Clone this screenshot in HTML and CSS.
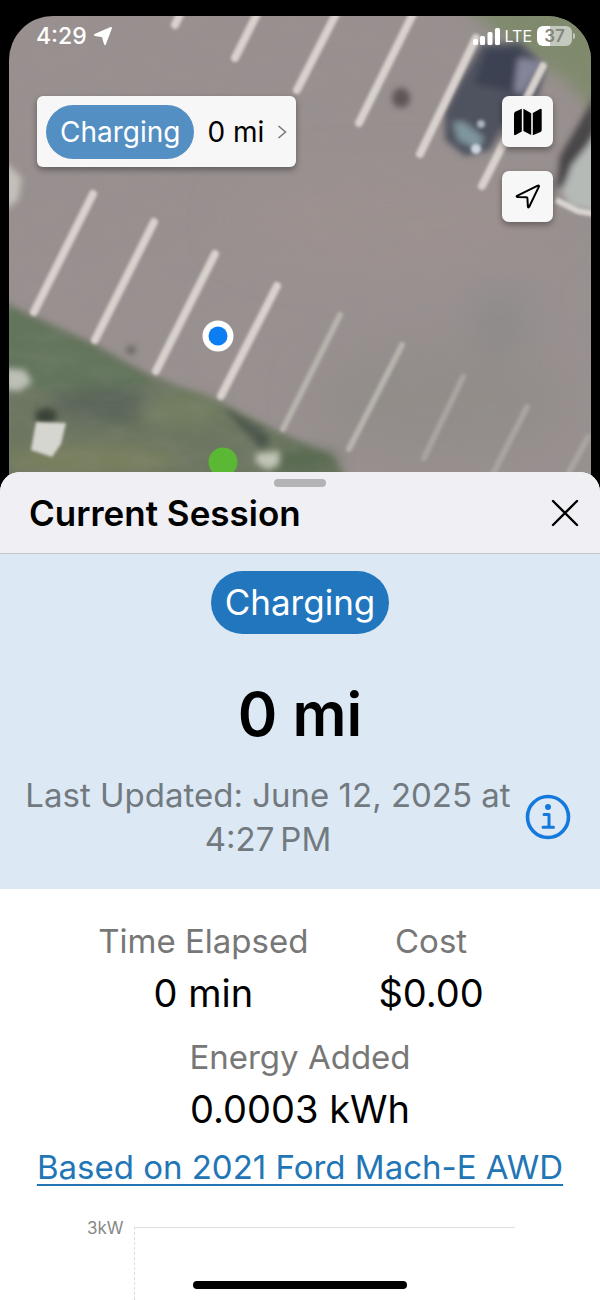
FILE: index.html
```html
<!DOCTYPE html>
<html lang="en">

<head>
    <meta charset="UTF-8">
    <meta name="viewport" content="width=device-width, initial-scale=1">
    <title>Current Session</title>
    <link rel="stylesheet" href="styles.css">
</head>

<body>
    <!-- Map with status bar and controls over it -->
    <div class="map-area">
        <svg class="map" viewBox="9 16 582 476" preserveAspectRatio="xMidYMin slice" aria-hidden="true">
            <defs>
                <filter id="soft" x="-20%" y="-20%" width="140%" height="140%">
                    <feGaussianBlur stdDeviation="1.4" />
                </filter>
                <filter id="medium" x="-20%" y="-20%" width="140%" height="140%">
                    <feGaussianBlur stdDeviation="3" />
                </filter>
                <filter id="softer" x="-30%" y="-30%" width="160%" height="160%">
                    <feGaussianBlur stdDeviation="8" />
                </filter>
                <filter id="softest" x="-30%" y="-30%" width="160%" height="160%">
                    <feGaussianBlur stdDeviation="20" />
                </filter>
                <filter id="grain" x="0" y="0" width="100%" height="100%">
                    <feTurbulence type="fractalNoise" baseFrequency="0.03 0.06" numOctaves="3" seed="8" />
                    <feColorMatrix type="matrix" values="0 0 0 0 0.3  0 0 0 0 0.3  0 0 0 0 0.28  1.2 0 0 0 -0.42" />
                </filter>
            </defs>
            <rect x="9" y="16" width="582" height="476" fill="#999090" />

            <!-- tone changes in the asphalt -->
            <g filter="url(#softest)">
                <ellipse cx="390" cy="220" rx="160" ry="50" fill="#9c9290" />
                <ellipse cx="440" cy="400" rx="130" ry="60" fill="#938d8a" />
                <ellipse cx="500" cy="320" rx="20" ry="30" fill="#888888" />
            </g>
            <path d="M455 0H610V130L570 84L520 50Z" fill="#7f8a6c" filter="url(#softer)" />

            <!-- grass -->
            <g filter="url(#medium)">
                <path d="M0 300L32 315L95 344L150 375L215 400L280 432L330 455L365 500H0Z" fill="#6c7661" />
                <path d="M0 304L95 348L150 379L130 410L60 400L0 370Z" fill="#63755c" />
            </g>
            <g filter="url(#softer)">
                <ellipse cx="110" cy="405" rx="60" ry="18" fill="#5b665a" />
                <ellipse cx="180" cy="410" rx="40" ry="14" fill="#748062" />
                <ellipse cx="90" cy="460" rx="90" ry="14" fill="#79805f" />
                <ellipse cx="305" cy="462" rx="34" ry="12" fill="#56694f" />
            </g>
            <path d="M224 408L262 428L270 440L262 452L250 438Z" fill="#4c564b" filter="url(#medium)" />
            <rect x="9" y="16" width="582" height="476" filter="url(#grain)" opacity="0.25" />

            <!-- dark spots and pale rocks -->
            <g filter="url(#medium)">
                <path d="M5 162L22 178L18 200L5 210Z" fill="#c4c0ba" />
                <ellipse cx="401" cy="98" rx="9" ry="10" fill="#5f5254" />
                <ellipse cx="131" cy="350" rx="4" ry="4" fill="#5d5855" />
                <ellipse cx="46" cy="416" rx="11" ry="8" fill="#3a4339" />
                <path d="M5 368L25 370L32 382L20 391L5 390Z" fill="#bcc0b5" />
                <path d="M256 453L280 451L279 465L268 470L256 463Z" fill="#c0c5b6" />
            </g>
            <path d="M36 422L66 423L61 444L52 457L31 450Z" fill="#d6d6d0" filter="url(#soft)" />

            <!-- parked cars -->
            <g filter="url(#medium)">
                <path d="M482 44L520 42L546 66L538 95L508 118L490 150L465 156L445 140L445 112L460 82Z" fill="#4f525f" />
                <path d="M486 50L520 48L526 66L512 92L474 84Z" fill="#3e4353" />
                <path d="M518 58L543 62L522 94L514 90Z" fill="#85859a" />
                <path d="M453 122L464 122L484 138L478 150L458 140Z" fill="#7f959d" />
                <path d="M595 96L580 122L560 156L556 190L572 180L595 130Z" fill="#484648" />
                <path d="M600 130L572 165L562 192L570 206L600 212Z" fill="#b6bab7" />
            </g>
            <g filter="url(#soft)">
                <circle cx="481" cy="124" r="4" fill="#a9b3bd" />
                <circle cx="476" cy="149" r="5" fill="#ccd5e0" />
                <path d="M556 200L578 211L596 214" fill="none" stroke="#d8d5d1" stroke-width="6" />
            </g>

            <!-- parking stripes -->
            <g filter="url(#soft)" fill="none" stroke-width="8" stroke-linecap="round">
                <g stroke="#d8d1cd">
                    <path d="M182 10L175 25" />
                    <path d="M257 14L235 58" />
                    <path d="M337 12L297 90" />
                    <path d="M414 12L359 123" />
                    <path d="M476 38L420 154" />
                    <path d="M543 66L482 186" />
                    <path d="M93 194L34 312" />
                    <path d="M154 222L95 340" />
                    <path d="M215 254L156 371" />
                    <path d="M277 286L221 396" />
                </g>
                <g stroke="#b8b4ae" stroke-width="6">
                    <path d="M340 315L283 429" />
                    <path d="M402 345L349 449" />
                </g>
                <g stroke="#a9a4a0" stroke-width="6">
                    <path d="M463 377L424 458" />
                    <path d="M527 407L493 474" />
                    <path d="M588 437L567 476" />
                </g>
            </g>

            <!-- current location and charger -->
            <circle cx="218" cy="336" r="15.500" fill="#fff" />
            <circle cx="218" cy="336" r="9.500" fill="#0d7ef2" />
            <circle cx="223" cy="462" r="14.500" fill="#5bb834" />
        </svg>

        <div class="overlay">
            <div class="status-bar">
                <span class="status-time">4:29
                    <svg width="20" height="20" viewBox="0 0 20 20" aria-hidden="true">
                        <path d="M2 9L18 2L12 18L9.800 10.200Z" fill="#fff" stroke="#fff" stroke-width="2" stroke-linejoin="round" />
                    </svg>
                </span>
                <span class="status-signal">
                    <svg width="27" height="17" viewBox="0 0 27 17" fill="#fff" aria-hidden="true">
                        <rect x="0" y="11" width="5" height="6" rx="1.500" />
                        <rect x="7" y="8" width="5" height="9" rx="1.500" />
                        <rect x="14.500" y="4" width="5" height="13" rx="1.500" />
                        <rect x="22" y="0" width="5" height="17" rx="1.500" />
                    </svg>
                    LTE
                    <span class="battery">37</span>
                </span>
            </div>

            <div class="map-controls">
                <button type="button" class="session-card">
                    <span class="pill pill-small">Charging</span>
                    <span>0 mi</span>
                    <svg width="10" height="16" viewBox="0 0 10 16" aria-hidden="true">
                        <path d="M1.500 2L8.500 8L1.500 14" fill="none" stroke="#777" stroke-width="1.500" />
                    </svg>
                </button>
                <div class="map-buttons">
                    <button type="button" class="map-button" aria-label="Map type">
                        <svg width="30" height="28" viewBox="0 0 30 28" aria-hidden="true">
                            <path d="M1 6Q1 4.500 2.200 3.800L8.800 .8V23.500L2.500 27Q1 27.600 1 26ZM10.400 .8L18.200 5.300V27L10.400 23ZM19.800 5L27 1Q28.700 .3 28.700 2V22Q28.700 23.300 27.500 24L19.800 27.300Z" fill="#000" />
                        </svg>
                    </button>
                    <button type="button" class="map-button" aria-label="My location">
                        <svg width="26" height="26" viewBox="0 0 26 26" aria-hidden="true">
                            <path d="M2 11.800L22.800 1.600Q24.400 1.200 23.900 2.600L14.200 22.800Q13.200 24.300 12.900 22.500L12.400 14.200Q12.300 13.400 11.400 13.300L2.500 13Q1 12.500 2 11.800Z" fill="none" stroke="#000" stroke-width="2" stroke-linejoin="round" />
                        </svg>
                    </button>
                </div>
            </div>
        </div>
    </div>

    <!-- Current session sheet -->
    <main class="sheet">
        <header class="sheet-header">
            <div class="grabber"></div>
            <div class="sheet-title">
                <h1>Current Session</h1>
                <button type="button" class="close-button" aria-label="Close">
                    <svg width="28" height="28" viewBox="0 0 28 28" aria-hidden="true">
                        <path d="M2 2L26 26M26 2L2 26" stroke="#000" stroke-width="2.400" stroke-linecap="round" />
                    </svg>
                </button>
            </div>
        </header>

        <section class="summary">
            <span class="pill">Charging</span>
            <p class="range">0 mi</p>
            <div class="updated">
                <p>Last Updated: June 12, 2025 at 4:27&#8239;PM</p>
                <button type="button" class="info-button" aria-label="More information">
                    <svg width="46" height="46" viewBox="0 0 46 46" aria-hidden="true">
                        <circle cx="23" cy="23" r="20.500" fill="none" stroke="#1478dc" stroke-width="3.600" />
                        <circle cx="23" cy="13" r="3" fill="#1478dc" />
                        <path d="M19 20.500H24V33M18 33.200H28.500" fill="none" stroke="#1478dc" stroke-width="3" stroke-linecap="round" stroke-linejoin="round" />
                    </svg>
                </button>
            </div>
        </section>

        <section class="details">
            <dl class="stats">
                <div class="stat">
                    <dt>Time Elapsed</dt>
                    <dd>0 min</dd>
                </div>
                <div class="stat">
                    <dt>Cost</dt>
                    <dd>$0.00</dd>
                </div>
            </dl>
            <dl class="stat">
                <dt>Energy Added</dt>
                <dd>0.0003 kWh</dd>
            </dl>
            <a class="vehicle-link" href="#">Based on 2021 Ford Mach-E AWD</a>
        </section>

        <!-- Power chart -->
        <div class="chart">
            <span class="chart-label">3kW</span>
            <div class="chart-plot"></div>
        </div>
    </main>
    <div class="home-indicator"></div>
</body>

</html>
```
FILE: styles.css
```css
* {
    box-sizing: border-box;
}

body {
    display: flex;
    flex-direction: column;
    min-height: 100vh;
    margin: 0;
    padding-top: 16px;
    background-color: #000;
    color: #000;
    font-family: Inter, "Liberation Sans", sans-serif;
}

h1,
p,
dl,
dd {
    margin: 0;
}

svg {
    display: block;
    flex-shrink: 0;
}

button {
    padding: 0;
    border: none;
    background: none;
    color: inherit;
    font-family: inherit;
    cursor: pointer;
}

/* Map area */
.map-area {
    display: grid;
    height: 476px;
    margin: 0 9px;
    border-radius: 44px 44px 0 0;
    overflow: hidden;
}

.map,
.overlay {
    grid-area: 1 / 1;
    width: 100%;
    min-height: 0;
}

.map {
    height: 476px;
}

.overlay {
    z-index: 1;
}

.status-bar {
    display: flex;
    justify-content: space-between;
    align-items: center;
    height: 40px;
    padding: 0 16px 0 27px;
    color: #fff;
}

.status-time,
.status-signal {
    display: flex;
    align-items: center;
}

.status-time {
    gap: 6px;
    font-size: 23px;
    font-weight: 500;
}

.status-signal {
    gap: 5px;
    font-size: 16px;
}

.battery {
    width: 35px;
    border-radius: 6px;
    background: linear-gradient(to right, #fff 37%, #c4c8bd 37%);
    color: #83867d;
    font-size: 17px;
    font-weight: 600;
    line-height: 20px;
    text-align: center;
}

/* Battery tip */
.status-signal::after {
    content: "";
    width: 2px;
    height: 6px;
    margin-left: -4px;
    border-radius: 0 2px 2px 0;
    background-color: #c4c8bd;
}

.map-controls {
    display: flex;
    justify-content: space-between;
    align-items: flex-start;
    padding: 40px 38px 0 28px;
}

.session-card,
.map-button {
    background-color: #f7f7f7;
    box-shadow: 0 3px 6px rgba(0, 0, 0, 0.35);
}

.session-card {
    display: flex;
    align-items: center;
    gap: 13px;
    height: 71px;
    padding: 0 9px;
    border-radius: 6px;
    font-size: 28px;
}

.map-buttons {
    display: grid;
    gap: 24px;
}

.map-button {
    display: grid;
    place-items: center;
    width: 51px;
    height: 51px;
    border-radius: 7px;
}

.pill {
    padding: 0 14px;
    border-radius: 32px;
    background-color: #2276bd;
    color: #fff;
    font-size: 35px;
    line-height: 63px;
}

.pill-small {
    background-color: #548fc3;
    font-size: 28px;
    line-height: 54px;
}

/* Bottom sheet */
.sheet {
    z-index: 1;
    display: flex;
    flex: 1;
    flex-direction: column;
    margin-top: -20px;
    border-radius: 20px 20px 0 0;
    background-color: #fff;
    overflow: hidden;
}

.sheet-header {
    padding-top: 7px;
    border-bottom: 1px solid #c3c5cb;
    background-color: #efeff4;
}

.grabber {
    width: 52px;
    height: 8px;
    margin: 0 auto;
    border-radius: 4px;
    background-color: #b3b3b6;
}

.sheet-title {
    display: flex;
    justify-content: space-between;
    align-items: center;
    padding: 3px 21px 17px 29px;
}

h1 {
    font-size: 35px;
    font-weight: 600;
    line-height: 46px;
}

.summary {
    display: flex;
    flex-direction: column;
    align-items: center;
    padding: 17px 29px 28px 18px;
    background-color: #dce9f5;
}

.summary .pill,
.range {
    margin-left: 11px;
}

.range {
    margin-top: 38px;
    margin-bottom: 17px;
    font-size: 60px;
    font-weight: 600;
    line-height: 84px;
}

.updated {
    display: flex;
    align-items: center;
    gap: 7px;
    width: 100%;
    color: #727a80;
    font-size: 33px;
    line-height: 44px;
    text-align: center;
}

.updated p {
    flex: 1;
}

/* Session numbers */
.details {
    display: flex;
    flex-direction: column;
    align-items: center;
    padding-top: 30px;
}

.stats {
    display: flex;
    gap: 70px;
    margin-bottom: 12px;
    padding-right: 18px;
}

.stat {
    text-align: center;
}

.stat dt {
    color: #777;
    font-size: 33px;
    line-height: 44px;
}

.stat dd {
    font-size: 38px;
    line-height: 60px;
}

.vehicle-link {
    color: #2276b6;
    font-size: 33px;
    line-height: 56px;
    text-decoration-thickness: 2px;
    text-underline-offset: 5px;
}

/* Chart */
.chart {
    display: flex;
    flex: 1;
    gap: 10px;
    margin: 22px 85px 0 87px;
}

.chart-label {
    color: #888;
    font-size: 17px;
    line-height: 22px;
}

.chart-plot {
    flex: 1;
    margin-top: 10px;
    border-top: 1px solid #ddd;
    border-left: 1px dashed #ddd;
}

.home-indicator {
    position: fixed;
    bottom: 11px;
    left: 50%;
    z-index: 2;
    width: 214px;
    height: 8px;
    margin-left: -107px;
    border-radius: 4px;
    background-color: #000;
}
```
